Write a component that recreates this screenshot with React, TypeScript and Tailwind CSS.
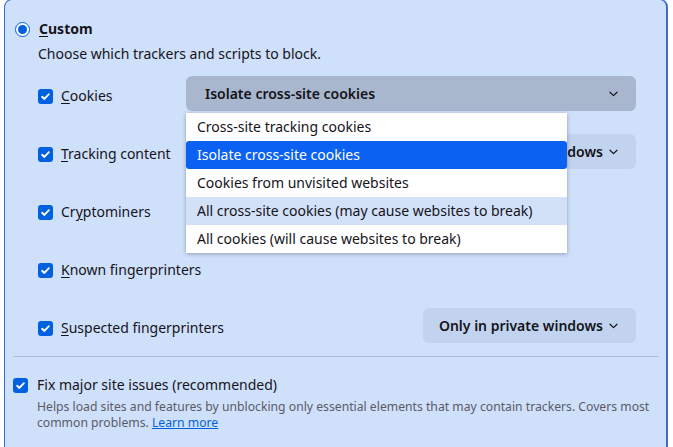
import React from 'react';

const Check = () => (
  <span className="flex h-[15px] w-[15px] shrink-0 items-center justify-center rounded-[3px] bg-[#0061e0]">
    <svg width="11" height="11" viewBox="0 0 12 12" fill="none">
      <path d="M2.3 6.3 4.8 8.7 9.7 3.4" stroke="white" strokeWidth="2" strokeLinecap="round" strokeLinejoin="round" />
    </svg>
  </span>
);

const Chevron = () => (
  <svg width="9" height="6" viewBox="0 0 9 6" fill="none">
    <path d="M1 1.2 4.5 4.6 8 1.2" stroke="#15141a" strokeWidth="1.2" strokeLinecap="round" strokeLinejoin="round" />
  </svg>
);

const cookieOptions = [
  'Cross-site tracking cookies',
  'Isolate cross-site cookies',
  'Cookies from unvisited websites',
  'All cross-site cookies (may cause websites to break)',
  'All cookies (will cause websites to break)',
];

const Row: React.FC<{ label: React.ReactNode; children?: React.ReactNode }> = ({ label, children }) => (
  <div className="relative flex h-[35px] items-start">
    <div className="mt-[10px] flex h-[20px] w-[148px] items-center gap-[8px]">
      <Check />
      <span className="whitespace-nowrap">{label}</span>
    </div>
    {children}
  </div>
);

const PrivateSelect = () => (
  <div className="ml-auto flex h-[35px] items-center gap-[6px] rounded-[6px] bg-[#c1d3ef] pl-[16px] pr-[18px] font-semibold">
    <span>Only in private windows</span>
    <Chevron />
  </div>
);

export default function App() {
  return (
    <div className="h-[447px] w-[673px] overflow-hidden bg-white font-['Segoe_UI','Noto_Sans',sans-serif] text-[14px] leading-[20px] text-[#15141a]">
      <div className="-mt-[1px] ml-[4px] h-[460px] w-[664px] rounded-[8px] border border-r-2 border-[#3a6fce] bg-[#cfe0fb]">
        <div className="pl-[10px] pr-[30px] pt-[19px]">
          <div className="flex h-[20px] items-center gap-[9px]">
            <span className="flex h-[15px] w-[15px] items-center justify-center rounded-full border-[1.5px] border-[#0061e0] bg-white">
              <span className="h-[9px] w-[9px] rounded-full bg-[#0061e0]" />
            </span>
            <span className="font-bold">
              <span className="underline underline-offset-2">C</span>ustom
            </span>
          </div>
          <div className="mt-[5px] pl-[23px]">Choose which trackers and scripts to block.</div>

          <div className="mt-[12px] flex flex-col gap-[23px] pl-[23px]">
            <Row label={<><span className="underline underline-offset-2">C</span>ookies</>}>
              <div className="relative ml-auto w-[450px]">
                <div className="flex h-[35px] items-center justify-between rounded-[6px] bg-[#a8b7ce] pl-[19px] pr-[18px] font-semibold">
                  <span>Isolate cross-site cookies</span>
                  <Chevron />
                </div>
                <div className="absolute left-0 top-[37px] z-10 w-[381px] bg-white shadow-[0_1px_4px_rgba(0,0,0,0.3)]">
                  {cookieOptions.map((o, i) => (
                    <div
                      key={o}
                      className={
                        i === 1
                          ? 'flex h-[28px] items-center whitespace-nowrap rounded-[3px] bg-[#0b62f2] px-[11px] text-white'
                          : i === 3
                          ? 'flex h-[28px] items-center whitespace-nowrap bg-[#d2e1f8] px-[11px]'
                          : 'flex h-[28px] items-center whitespace-nowrap px-[11px]'
                      }
                    >
                      {o}
                    </div>
                  ))}
                </div>
              </div>
            </Row>
            <Row label={<><span className="underline underline-offset-2">T</span>racking content</>}>
              <PrivateSelect />
            </Row>
            <Row label={<>Cr<span className="underline underline-offset-2">y</span>ptominers</>} />
            <Row label={<><span className="underline underline-offset-2">K</span>nown fingerprinters</>} />
            <Row label={<><span className="underline underline-offset-2">S</span>uspected fingerprinters</>}>
              <PrivateSelect />
            </Row>
          </div>
        </div>

        <div className="ml-[9px] mr-[8px] mt-[13px] h-px bg-[#a9bcdb]" />

        <div className="pl-[8px] pr-[10px] pt-[18px]">
          <div className="flex h-[20px] items-center gap-[9px]">
            <Check />
            <span>Fix major site issues (recommended)</span>
          </div>
          <p className="mt-[4px] pl-[24px] text-[12.2px] leading-[16px] text-[#5b5b66]">
            Helps load sites and features by unblocking only essential elements that may contain trackers. Covers most common problems.{' '}
            <a className="text-[#0061e0] underline">Learn more</a>
          </p>
        </div>
      </div>
    </div>
  );
}
